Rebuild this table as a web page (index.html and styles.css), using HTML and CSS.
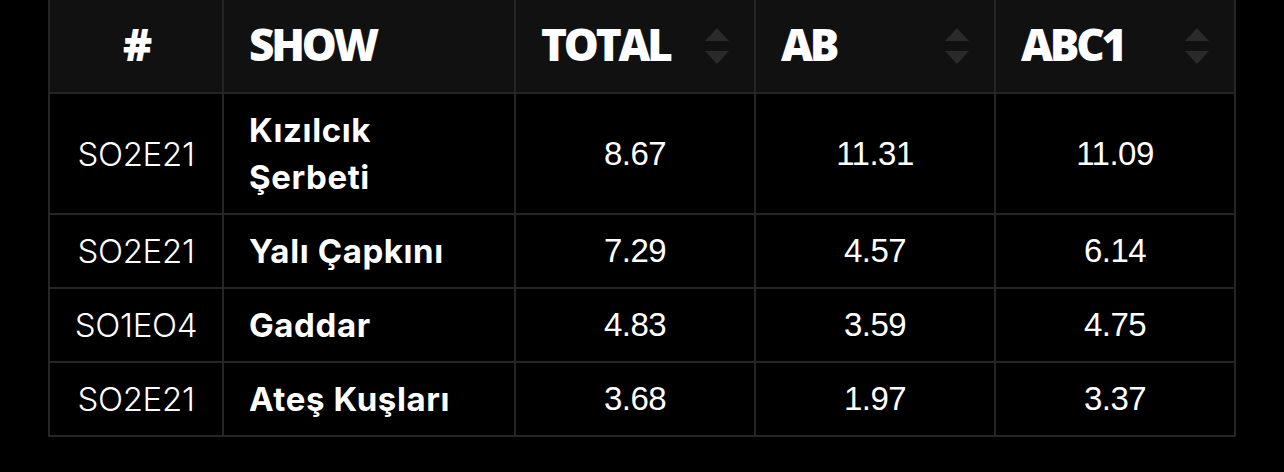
FILE: index.html
```html
<!DOCTYPE html>
<html>
<head>
<meta charset="utf-8">
<link rel="stylesheet" href="styles.css">
</head>
<body>
<table class="ratings">
  <colgroup>
    <col class="c-ep"><col class="c-show"><col class="c-num"><col class="c-num"><col class="c-num">
  </colgroup>
  <thead>
    <tr>
      <th class="h-center">#</th>
      <th>SHOW</th>
      <th><div class="h-sort"><span>TOTAL</span><span class="arrows"><i class="up"></i><i class="down"></i></span></div></th>
      <th><div class="h-sort"><span>AB</span><span class="arrows"><i class="up"></i><i class="down"></i></span></div></th>
      <th><div class="h-sort"><span>ABC1</span><span class="arrows"><i class="up"></i><i class="down"></i></span></div></th>
    </tr>
  </thead>
  <tbody>
    <tr class="tall">
      <td class="ep">SO2E21</td>
      <td class="name">Kızılcık<br>Şerbeti</td>
      <td class="num">8.67</td>
      <td class="num">11.31</td>
      <td class="num">11.09</td>
    </tr>
    <tr>
      <td class="ep">SO2E21</td>
      <td class="name">Yalı Çapkını</td>
      <td class="num">7.29</td>
      <td class="num">4.57</td>
      <td class="num">6.14</td>
    </tr>
    <tr>
      <td class="ep">SO1EO4</td>
      <td class="name">Gaddar</td>
      <td class="num">4.83</td>
      <td class="num">3.59</td>
      <td class="num">4.75</td>
    </tr>
    <tr>
      <td class="ep">SO2E21</td>
      <td class="name">Ateş Kuşları</td>
      <td class="num">3.68</td>
      <td class="num">1.97</td>
      <td class="num">3.37</td>
    </tr>
  </tbody>
</table>
</body>
</html>
```

FILE: styles.css
```css
html, body {
  margin: 0;
  padding: 0;
  background: #000;
}

body {
  height: 472px;
  overflow: hidden;
  font-family: "Inter", "Liberation Sans", sans-serif;
  color: #fff;
}

.ratings {
  margin-left: 48px;
  width: 1187px;
  table-layout: fixed;
  border-collapse: collapse;
}

.c-ep { width: 174px; }
.c-show { width: 292px; }
.c-num { width: 240px; }

.ratings th,
.ratings td {
  border: 2px solid #252525;
  padding: 0 25px;
}

.ratings thead tr {
  height: 93px;
  background: #111;
}

.ratings thead th {
  border-top: none;
  text-align: left;
  font-family: "Open Sans", "Liberation Sans", sans-serif;
  font-weight: 800;
  font-size: 44px;
  letter-spacing: -3.2px;
  line-height: 1;
  color: #fff;
  padding-bottom: 4px;
}

.ratings thead th.h-center {
  text-align: center;
}

.h-sort {
  display: flex;
  align-items: center;
  justify-content: space-between;
}

.arrows {
  display: flex;
  flex-direction: column;
  gap: 10px;
  margin-top: 4px;
}

.arrows i {
  display: block;
  width: 0;
  height: 0;
  border-left: 12px solid transparent;
  border-right: 12px solid transparent;
}

.arrows .up {
  border-bottom: 13px solid #2a2a2a;
}

.arrows .down {
  border-top: 13px solid #2a2a2a;
}

.ratings tbody tr {
  height: 74px;
}

.ratings tbody tr.tall {
  height: 121px;
}

.ep {
  text-align: center;
  font-weight: 300;
  font-size: 33px;
  letter-spacing: -0.3px;
}

.ratings td.ep {
  padding: 0;
}

.name {
  font-weight: 700;
  font-size: 33px;
  letter-spacing: 0.6px;
  line-height: 47px;
}

.num {
  text-align: center;
  font-family: "Liberation Sans", sans-serif;
  font-weight: 400;
  font-size: 33px;
  letter-spacing: -0.5px;
}
```
